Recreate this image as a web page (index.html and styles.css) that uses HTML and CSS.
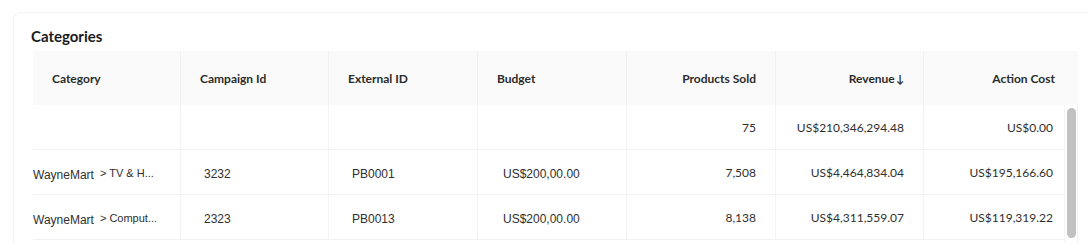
FILE: index.html
```html
<!DOCTYPE html>
<html>
<head>
<meta charset="utf-8">
<link rel="stylesheet" href="styles.css">
</head>
<body>
<div class="card">
  <h2 class="title">Categories</h2>
  <div class="table">
    <div class="thead">
      <div class="th">Category</div>
      <div class="th">Campaign Id</div>
      <div class="th">External ID</div>
      <div class="th">Budget</div>
      <div class="th num">Products Sold</div>
      <div class="th num">Revenue<span class="arrow">↓</span></div>
      <div class="th num last">Action Cost</div>
    </div>
    <div class="tbody">
      <div class="rows">
        <div class="tr">
          <div class="td first"></div>
          <div class="td"></div>
          <div class="td"></div>
          <div class="td"></div>
          <div class="td num">75</div>
          <div class="td num">US$210,346,294.48</div>
          <div class="td num last">US$0.00</div>
        </div>
        <div class="tr">
          <div class="td first"><span class="brand">WayneMart</span><span class="sub">&gt; TV &amp; H...</span></div>
          <div class="td plain">3232</div>
          <div class="td plain">PB0001</div>
          <div class="td plain budget">US$200,00.00</div>
          <div class="td num">7,508</div>
          <div class="td num">US$4,464,834.04</div>
          <div class="td num last">US$195,166.60</div>
        </div>
        <div class="tr">
          <div class="td first"><span class="brand">WayneMart</span><span class="sub">&gt; Comput...</span></div>
          <div class="td plain">2323</div>
          <div class="td plain">PB0013</div>
          <div class="td plain budget">US$200,00.00</div>
          <div class="td num">8,138</div>
          <div class="td num">US$4,311,559.07</div>
          <div class="td num last">US$119,319.22</div>
        </div>
      </div>
      <div class="scrollbar"><div class="thumb"></div></div>
    </div>
  </div>
</div>
</body>
</html>
```
FILE: styles.css
```css
html, body {
  margin: 0;
  padding: 0;
  background: #ffffff;
  overflow: hidden;
}
body {
  width: 1088px;
  height: 242px;
}
.card {
  margin: 12px 0 0 13px;
  width: 1075px;
  height: 230px;
  border: 1px solid #f2f2f2;
  border-right: none;
  border-bottom: none;
  border-radius: 8px 0 0 0;
  padding: 12px 0 0 19px;
  box-sizing: border-box;
  font-family: Lato, "Noto Sans", sans-serif;
  color: #222;
  overflow: hidden;
}
.title {
  margin: 0 0 4px -2px;
  font-size: 15px;
  line-height: 22px;
  font-weight: 700;
  color: #1b1b1b;
}
.table {
  width: 1045px;
}
.thead {
  display: grid;
  grid-template-columns: 148px 148px 149px 149px 149px 148px 154px;
  height: 54px;
  background: #fafafa;
}
.th {
  display: flex;
  align-items: center;
  padding: 0 19px;
  font-size: 12px;
  font-weight: 700;
  color: #2c2c2c;
  border-right: 1px solid #f1f1f1;
}
.th.num {
  justify-content: flex-end;
}
.th.last {
  border-right: none;
  padding-right: 23px;
}
.arrow {
  font-size: 11px;
  margin-left: 1px;
}
.tbody {
  display: flex;
  height: 137px;
  overflow: hidden;
}
.rows {
  flex: 1;
}
.tr {
  display: grid;
  grid-template-columns: 148px 148px 149px 149px 149px 148px 139px;
  height: 45px;
  border-bottom: 1px solid #f1f1f1;
  box-sizing: border-box;
}
.td {
  display: flex;
  align-items: center;
  padding: 0 19px;
  font-size: 12px;
  color: #2f2f2f;
  border-right: 1px solid #f4f4f4;
  white-space: nowrap;
  overflow: hidden;
}
.td.first {
  padding: 3px 0 0 0;
}
.td.plain {
  font-family: "Liberation Sans", Arial, sans-serif;
  padding: 4px 0 0 23px;
}
.td.budget {
  padding-left: 25px;
}
.td.num {
  justify-content: flex-end;
  padding-top: 1px;
}
.td.last {
  border-right: none;
  padding-right: 10px;
}
.brand {
  font-family: "Liberation Sans", Arial, sans-serif;
  font-size: 12px;
  padding-top: 2px;
}
.sub {
  font-family: "Liberation Sans", Arial, sans-serif;
  font-size: 11px;
  margin-left: 6px;
  padding-bottom: 2px;
}
.scrollbar {
  width: 14px;
  box-sizing: border-box;
  border-left: 1px solid #f2f2f2;
  border-right: 1px solid #f2f2f2;
  padding: 3px 2px 0 2px;
}
.thumb {
  width: 9px;
  height: 130px;
  background: #c1c1c1;
  border-radius: 5px;
}
```
